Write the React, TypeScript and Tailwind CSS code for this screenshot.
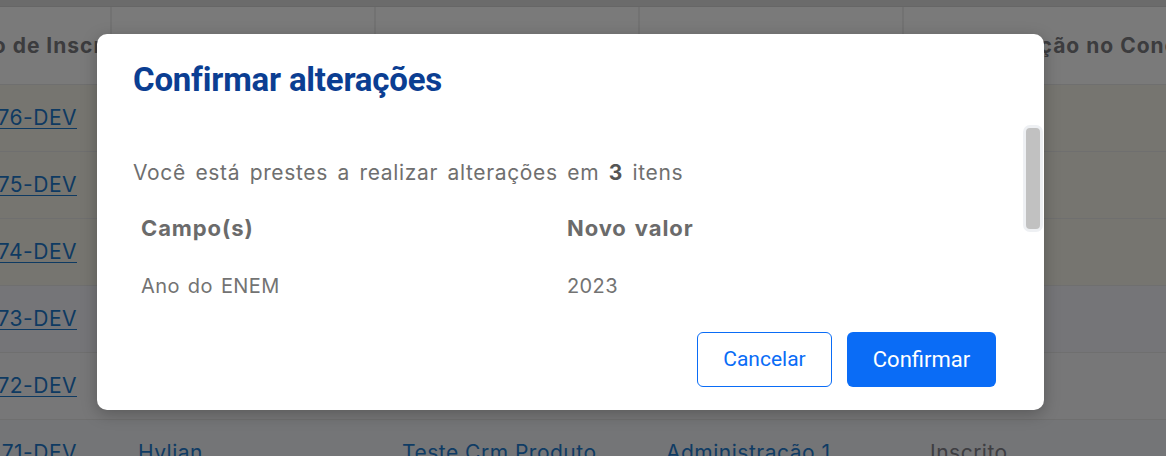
import React from "react";

const rows = [
  { id: "0000176-DEV", bg: "bg-[#eceae0]" },
  { id: "0000175-DEV", bg: "bg-[#eceae0]" },
  { id: "0000174-DEV", bg: "bg-[#eceae0]" },
  { id: "0000173-DEV", bg: "bg-[#eaebf0]" },
  { id: "0000172-DEV", bg: "bg-[#eeeef0]" },
  { id: "0000171-DEV", bg: "bg-[#e9eaef]" },
];

export default function App() {
  return (
    <div className="relative w-[1166px] h-[456px] overflow-hidden bg-white" style={{ fontFamily: "Inter, 'Noto Sans', sans-serif" }}>
      {/* Background table */}
      <div className="flex flex-col">
        <div className="h-[7px] bg-[#d6d6d6] border-b border-[#cccccc]" />
        <div className="flex h-[78px] bg-[#f4f4f4] border-b border-[#dedede] text-[21px] tracking-[1px] font-bold text-[#78787c] whitespace-nowrap">
          <div className="w-[112px] shrink-0 flex items-center border-r-2 border-[#e4e4e4] overflow-visible">
            <span className="ml-[-81px]">Número de Inscrição</span>
          </div>
          <div className="w-[264px] shrink-0 border-r-2 border-[#e4e4e4] flex items-center pl-[26px]">Nome</div>
          <div className="w-[264px] shrink-0 border-r-2 border-[#e4e4e4] flex items-center pl-[26px]">Curso</div>
          <div className="w-[264px] shrink-0 border-r-2 border-[#e4e4e4] flex items-center pl-[26px]">Unidade</div>
          <div className="w-[400px] shrink-0 flex items-center pl-[24px]">Classificação no Concurso</div>
        </div>
        {rows.map((r, i) => (
          <div key={i} className={`flex h-[67px] border-b border-[#dedede] ${r.bg} text-[21px] tracking-[0.5px] whitespace-nowrap`}>
            <div className="w-[112px] shrink-0 flex items-center justify-end pr-[35px]">
              <span className="text-[#1c74c4] underline underline-offset-[3px] decoration-1">{r.id}</span>
            </div>
            <div className="w-[264px] shrink-0 flex items-center pl-[26px] text-[#1f78c8]">Hylian</div>
            <div className="w-[264px] shrink-0 flex items-center pl-[26px] text-[#1f78c8]">Teste Crm Produto</div>
            <div className="w-[264px] shrink-0 flex items-center pl-[26px] text-[#1f78c8]">Administração 1</div>
            <div className="w-[400px] shrink-0 flex items-center pl-[26px] text-[#7c7c84]">Inscrito</div>
          </div>
        ))}
      </div>

      {/* Overlay */}
      <div className="absolute inset-0 bg-black/50" />

      {/* Modal */}
      <div className="absolute left-[97px] top-[34px] w-[947px] h-[376px] bg-white rounded-[10px] shadow-[0_4px_16px_rgba(0,0,0,0.25)] flex flex-col overflow-hidden">
        <div className="h-[86px] pl-9 pt-[26px]">
          <h2 className="text-[33px] leading-[40px] font-bold text-[#0b3e92] tracking-[-0.2px]" style={{ fontFamily: "Roboto, 'Noto Sans', sans-serif" }}>
            Confirmar alterações
          </h2>
        </div>
        <div className="flex h-[198px]">
          <div className="flex-1 pl-9 pr-6 overflow-hidden">
            <p className="pt-[39px] text-[21px] leading-[28px] tracking-[0.65px] [word-spacing:3px] text-[#6f6f6f] whitespace-nowrap">
              Você está prestes a realizar alterações em <span className="font-bold text-[#555555]">3</span> itens
            </p>
            <div className="mt-[13px] text-[20px] tracking-[0.4px] [word-spacing:2px] text-[#737373] whitespace-nowrap">
              <div className="grid grid-cols-[434px_1fr] h-[57px] items-center font-bold text-[22px] tracking-[0.9px] text-[#6b6b6b]">
                <div className="pl-2">Campo(s)</div>
                <div>Novo valor</div>
              </div>
              <div className="grid grid-cols-[434px_1fr] h-[57px] items-center">
                <div className="pl-2">Ano do ENEM</div>
                <div>2023</div>
              </div>
            </div>
          </div>
          <div className="w-[21px] pt-[5px]">
            <div className="w-[20px] h-[107px] rounded-[7px] border-[3px] border-[#eef0f3] bg-[#c1c1c1]" />
          </div>
        </div>
        <div className="flex justify-end gap-[15px] pt-[14px] pr-12" style={{ fontFamily: "Roboto, 'Noto Sans', sans-serif" }}>
          <button className="w-[135px] h-[55px] rounded-[6px] border border-[#0a6cf6] text-[#0a6cf6] text-[21px] bg-white">
            Cancelar
          </button>
          <button className="w-[149px] h-[55px] rounded-[6px] bg-[#0a6cf6] text-white text-[22px]">
            Confirmar
          </button>
        </div>
      </div>
    </div>
  );
}
